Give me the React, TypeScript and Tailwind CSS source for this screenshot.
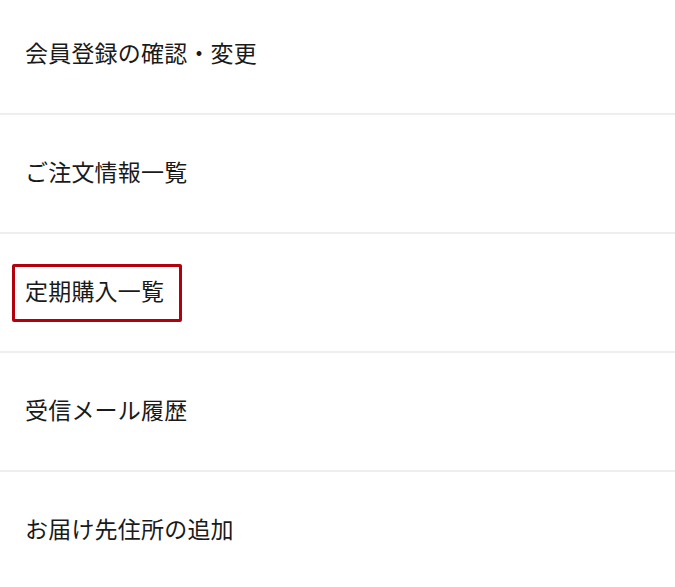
import React from 'react';

const items = ['会員登録の確認・変更', 'ご注文情報一覧', '定期購入一覧', '受信メール履歴', 'お届け先住所の追加'];

export default function App() {
  return (
    <div
      className="w-[675px] h-[587px] overflow-hidden bg-white text-[#1a1a1a]"
      style={{ fontFamily: '"Noto Sans CJK JP", "Noto Sans", sans-serif' }}
    >
      <ul className="-mt-[4px]">
        {items.map((label, i) => (
          <li
            key={label}
            className="relative flex h-[119px] items-center border-b-2 border-[#eeeeee] pl-[25px] text-[23px] leading-none"
          >
            {/* Highlight frame */}
            {i === 2 && (
              <span className="absolute left-[12px] top-[30px] h-[58px] w-[170px] rounded-[2px] border-[3px] border-[#b4000c]" />
            )}
            <span className="-mt-[4px] tracking-[0.2px]">{label}</span>
          </li>
        ))}
      </ul>
    </div>
  );
}
